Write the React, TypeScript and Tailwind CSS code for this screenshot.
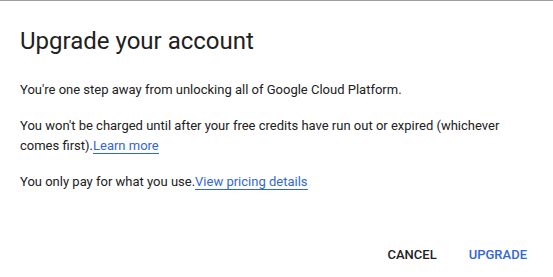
import React from 'react';

const App: React.FC = () => {
  return (
    <div className="w-[553px] h-[277px] bg-white border-t border-[#9e9e9e] font-['Roboto',sans-serif] text-[#212121] overflow-hidden">
      <div className="pl-5 pt-6">
        <h1 className="text-[24px] leading-8 font-normal">Upgrade your account</h1>

        <div className="mt-[23px] w-[495px] text-[13px] leading-5">
          <p className="mb-4">You're one step away from unlocking all of Google Cloud Platform.</p>
          <p className="mb-4">
            You won't be charged until after your free credits have run out or expired (whichever comes first).
            <a href="#" className="text-[#3367d6] border-b border-[#3367d6]">Learn more</a>
          </p>
          <p>
            You only pay for what you use.
            <a href="#" className="text-[#3367d6] border-b border-[#3367d6]">View pricing details</a>
          </p>
        </div>
      </div>

      {/* Actions */}
      <div className="flex justify-end pr-[10px] mt-[45px]">
        <button className="h-9 px-4 text-[13px] font-medium uppercase text-[#212121]">Cancel</button>
        <button className="h-9 px-4 text-[13px] font-medium uppercase text-[#3367d6]">Upgrade</button>
      </div>
    </div>
  );
};

export default App;
